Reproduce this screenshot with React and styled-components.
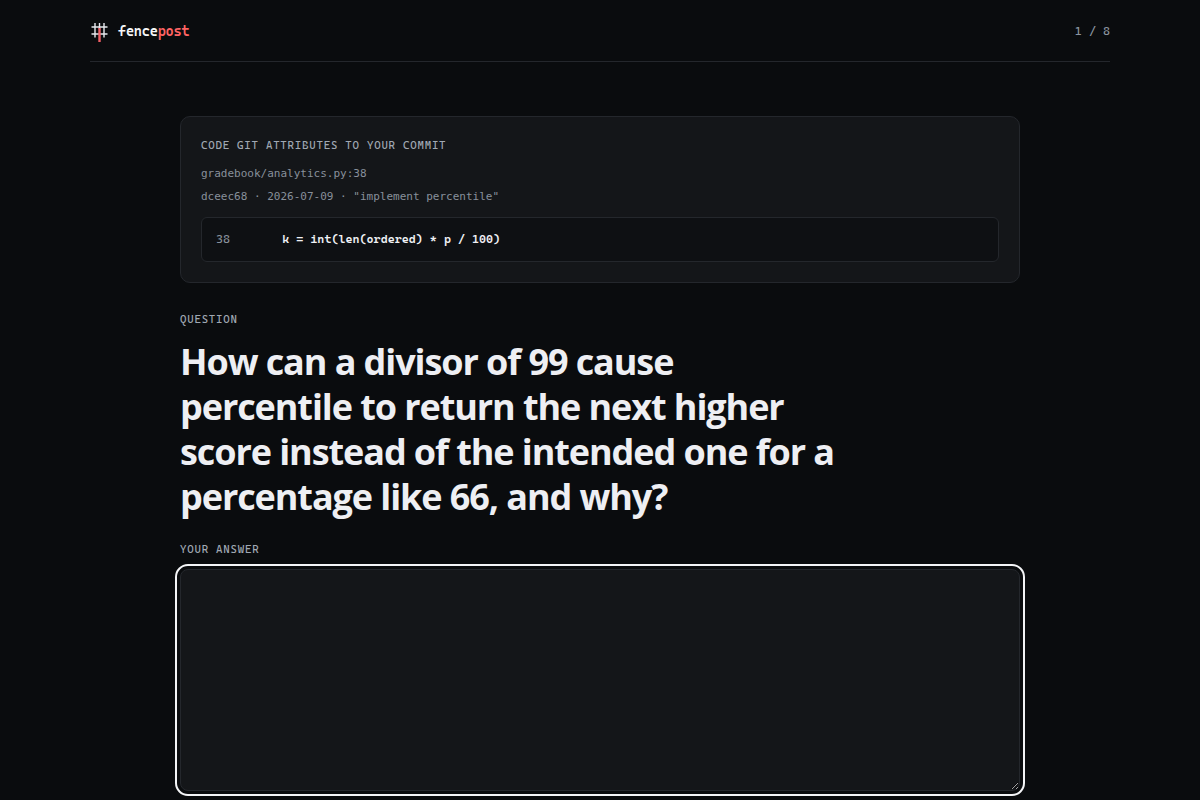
import React from "react";
import styled, { createGlobalStyle } from "styled-components";

const mono = `"Cascadia Mono", "DejaVu Sans Mono", "Liberation Mono", monospace`;
const metaMono = `"DejaVu Sans Mono", "Liberation Mono", monospace`;
const sans = `"Segoe UI", "Open Sans", "Noto Sans", sans-serif`;

const GlobalStyle = createGlobalStyle`
  *, *::before, *::after { box-sizing: border-box; }
  html { background: #0a0c0e; }
  body {
    margin: 0;
    color: #f0f1f5;
    font-family: ${sans};
  }
`;

const Shell = styled.div`
  max-width: 1068px;
  margin: 0 auto;
  padding: 0 24px 16px;
`;

const Header = styled.header`
  display: flex;
  align-items: center;
  justify-content: space-between;
  height: 62px;
  border-bottom: 1px solid #24272c;
`;

const Brand = styled.a`
  display: flex;
  align-items: center;
  gap: 8px;
  color: #f6f7f9;
  font: 600 14px/20px ${mono};
  letter-spacing: -0.02em;
  text-decoration: none;
`;

const Accent = styled.span`
  color: #ff6464;
`;

const Logo = styled.svg`
  display: block;
  width: 20px;
  height: 24px;
`;

const Progress = styled.span`
  color: #8b949e;
  font: 400 12px/20px ${mono};
`;

const Main = styled.main`
  max-width: 840px;
  margin: 0 auto;
  padding-top: 54px;
`;

const Eyebrow = styled.p`
  margin: 0;
  color: #a0a8b3;
  font: 400 11px/18px ${mono};
  letter-spacing: 0.07em;
  text-transform: uppercase;
`;

const Evidence = styled.section`
  display: flex;
  flex-direction: column;
  padding: 20px;
  border: 1px solid #24272c;
  border-radius: 10px;
  background: #141619;
`;

const Meta = styled.div`
  margin: 7px 0 9px;
  color: #88909b;
  font: 400 11px/23px ${metaMono};
`;

const MetaLine = styled.p`
  margin: 0;
`;

const Code = styled.pre`
  display: flex;
  gap: 24px;
  margin: 0;
  padding: 11px 14px;
  border: 1px solid #24272c;
  border-radius: 6px;
  background: #0e1013;
  overflow-x: auto;
  font: 600 12px/21px ${mono};

  code {
    font: inherit;
  }
`;

const LineNumber = styled.span`
  color: #88909b;
  font-weight: 400;
`;

const Question = styled.section`
  margin-top: 28px;
`;

const Title = styled.h1`
  max-width: 664px;
  margin: 10px 0 22px;
  color: #eeeff3;
  font: 700 36px/45px ${sans};
  letter-spacing: -0.03em;
`;

const AnswerLabel = styled(Eyebrow).attrs({ as: "label" })`
  display: block;
  margin-bottom: 10px;
`;

const Answer = styled.textarea`
  display: block;
  width: 100%;
  height: 222px;
  padding: 16px;
  border: 1px solid #24272c;
  border-radius: 8px;
  background: #141619;
  color: #f0f1f5;
  font: 400 16px/24px ${sans};
  resize: vertical;

  &:focus {
    outline: 2px solid #f4f5f7;
    outline-offset: 3px;
  }
`;

function FenceLogo() {
  return (
    <Logo viewBox="0 0 20 24" fill="none" aria-hidden="true">
      <path d="M5 4v14.5M14 4v14.5M9.5 4v6M1.5 8h16M1.5 15h16" stroke="#e8eaee" strokeWidth="1.4" />
      <path d="M9.5 9v14" stroke="#f26066" strokeWidth="2.4" />
    </Logo>
  );
}

export default function App() {
  return (
    <>
      <GlobalStyle />
      <Shell>
        <Header>
          <Brand href="#">
            <FenceLogo />
            <span>fence<Accent>post</Accent></span>
          </Brand>
          <Progress>1 / 8</Progress>
        </Header>
        <Main>
          <Evidence>
            <Eyebrow>Code git attributes to your commit</Eyebrow>
            <Meta>
              <MetaLine>gradebook/analytics.py:38</MetaLine>
              <MetaLine>dceec68 · 2026-07-09 · "implement percentile"</MetaLine>
            </Meta>
            <Code>
              <LineNumber>38</LineNumber>
              <code>{"    k = int(len(ordered) * p / 100)"}</code>
            </Code>
          </Evidence>
          <Question>
            <Eyebrow>Question</Eyebrow>
            <Title>
              How can a divisor of 99 cause percentile to return the next higher
              score instead of the intended one for a percentage like 66, and why?
            </Title>
            <AnswerLabel htmlFor="answer">Your answer</AnswerLabel>
            <Answer id="answer" autoFocus />
          </Question>
        </Main>
      </Shell>
    </>
  );
}
